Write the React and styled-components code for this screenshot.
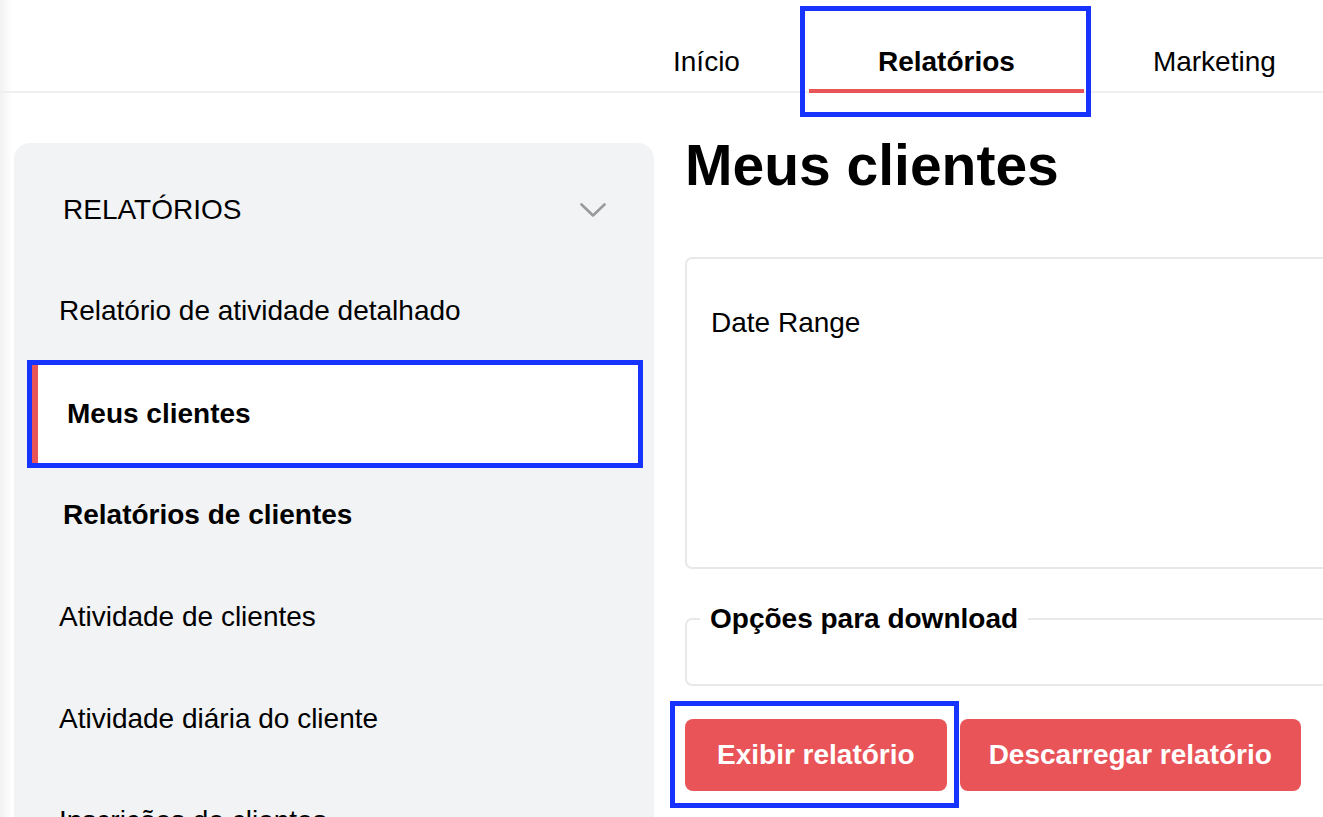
import React from "react";
import styled, { createGlobalStyle } from "styled-components";

const GlobalStyle = createGlobalStyle`
  html, body {
    margin: 0;
    padding: 0;
  }
  body {
    font-family: "Liberation Sans", Arial, Helvetica, sans-serif;
    color: #000;
    background: linear-gradient(to right, #f2f2f2 0, #ffffff 12px) no-repeat, #fff;
    overflow: hidden;
  }
`;

const RED = "#e95459";
const MARK = "#1733ff";

const Header = styled.header`
  display: flex;
  align-items: flex-end;
  height: 91px;
  padding-left: 604px;
  border-bottom: 2px solid #efefef;
`;

const Tab = styled.a`
  position: relative;
  display: block;
  padding: 42px 69px 11px;
  margin-bottom: -2px;
  font-size: 28px;
  line-height: 32px;
  font-weight: ${(p) => (p.$active ? 700 : 400)};
  color: #000;
  text-decoration: none;
  border-bottom: 4px solid ${(p) => (p.$active ? RED : "transparent")};
  cursor: pointer;

  ${(p) =>
    p.$marked &&
    `
    &::after {
      content: "";
      position: absolute;
      left: -9px;
      right: -7px;
      top: 2px;
      bottom: -28px;
      border: 5px solid ${MARK};
      pointer-events: none;
    }
  `}
`;

const Body = styled.div`
  display: flex;
  align-items: flex-start;
  gap: 31px;
  padding: 50px 0 0 14px;
`;

const Sidebar = styled.aside`
  flex: none;
  width: 640px;
  min-height: 900px;
  background: #f2f3f5;
  border-radius: 16px 16px 0 0;
`;

const SideHead = styled.div`
  display: flex;
  align-items: center;
  justify-content: space-between;
  padding: 51px 48px 34px 49px;
  font-size: 28px;
  line-height: 32px;
`;

const SideItem = styled.div`
  position: relative;
  display: flex;
  align-items: center;
  height: ${(p) => (p.$active ? "98px" : "102px")};
  margin: ${(p) => (p.$active ? "3px 16px 1px 18px" : "0")};
  padding-left: ${(p) => (p.$active ? "29px" : p.$bold ? "49px" : "45px")};
  font-size: 28px;
  line-height: 32px;
  font-weight: ${(p) => (p.$bold || p.$active ? 700 : 400)};
  background: ${(p) => (p.$active ? "#fff" : "transparent")};
  border-left: ${(p) => (p.$active ? `6px solid ${RED}` : "none")};
  outline: ${(p) => (p.$active ? `5px solid ${MARK}` : "none")};
  cursor: pointer;
`;

const Main = styled.main`
  flex: none;
  width: 720px;
  margin-top: -6px;
`;

const Title = styled.h1`
  margin: 0 0 64px;
  font-size: 57px;
  line-height: 56px;
  font-weight: 700;
`;

const DateBox = styled.section`
  height: 312px;
  box-sizing: border-box;
  padding: 48px 24px 0;
  border: 2px solid #e8e8e8;
  border-radius: 7px;
  font-size: 28px;
  line-height: 32px;
  margin-bottom: 34px;
`;

const Fieldset = styled.fieldset`
  margin: 0;
  padding: 0 13px 49px;
  border: 2px solid #e8e8e8;
  border-radius: 7px;
`;

const Legend = styled.legend`
  padding: 0 10px;
  font-size: 28px;
  line-height: 32px;
  font-weight: 700;
`;

const Actions = styled.div`
  display: flex;
  gap: 13px;
  margin-top: 33px;
`;

const Button = styled.button`
  position: relative;
  height: 72px;
  padding: 0 ${(p) => p.$pad}px;
  border: none;
  border-radius: 8px;
  background: ${RED};
  color: #fff;
  font-family: inherit;
  font-size: 28px;
  font-weight: 700;
  cursor: pointer;

  ${(p) =>
    p.$marked &&
    `
    &::after {
      content: "";
      position: absolute;
      left: -15px;
      right: -12px;
      top: -18px;
      bottom: -17px;
      border: 5px solid ${MARK};
      pointer-events: none;
    }
  `}
`;

const Chevron = () => (
  <svg width="26" height="15" viewBox="0 0 26 15" fill="none">
    <polyline points="1.5,1.5 13,12.5 24.5,1.5" stroke="#9a9a9a" strokeWidth="2.6" strokeLinecap="round" strokeLinejoin="round" />
  </svg>
);

const items = [
  { label: "Relatório de atividade detalhado" },
  { label: "Meus clientes", active: true },
  { label: "Relatórios de clientes", bold: true },
  { label: "Atividade de clientes" },
  { label: "Atividade diária do cliente" },
  { label: "Inscrições de clientes" },
];

export default function App() {
  return (
    <>
      <GlobalStyle />
      <Header>
        <Tab>Início</Tab>
        <Tab $active $marked>Relatórios</Tab>
        <Tab>Marketing</Tab>
      </Header>
      <Body>
        <Sidebar>
          <SideHead>
            RELATÓRIOS
            <Chevron />
          </SideHead>
          {items.map((it) => (
            <SideItem key={it.label} $active={it.active} $bold={it.bold}>
              {it.label}
            </SideItem>
          ))}
        </Sidebar>
        <Main>
          <Title>Meus clientes</Title>
          <DateBox>Date Range</DateBox>
          <Fieldset>
            <Legend>Opções para download</Legend>
          </Fieldset>
          <Actions>
            <Button $pad={32} $marked>Exibir relatório</Button>
            <Button $pad={29}>Descarregar relatório</Button>
          </Actions>
        </Main>
      </Body>
    </>
  );
}
